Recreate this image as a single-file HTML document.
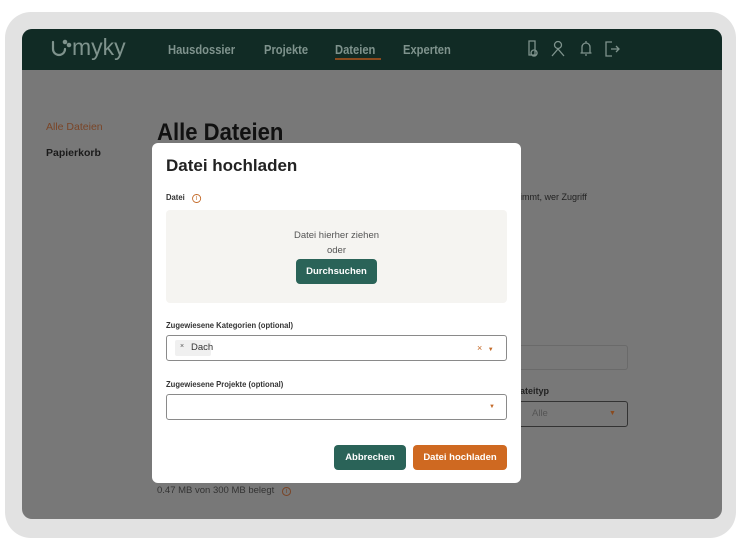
<!DOCTYPE html>
<html><head><meta charset="utf-8"><style>
*{margin:0;padding:0;box-sizing:border-box}
body{width:738px;height:554px;background:#fff;font-family:"Liberation Sans",sans-serif;position:relative;overflow:hidden}
.frame{position:absolute;left:5px;top:12px;width:731px;height:526px;background:#e2e2e2;border-radius:26px}
.screen{position:absolute;left:22px;top:29px;width:700px;height:490px;background:#787878;border-radius:10px;overflow:hidden}
.nav{position:absolute;left:0;top:0;width:700px;height:41px;background:#112b25}
.a{position:absolute;white-space:nowrap}
.navt{color:#7f938d;font-size:13px;font-weight:bold;top:13px;transform:scaleX(0.86);transform-origin:left}
.modal{position:absolute;left:152px;top:143px;width:369px;height:340px;background:#fff;border-radius:6px}
.lbl{font-size:8.5px;color:#333;font-weight:bold;transform:scaleX(0.9);transform-origin:left}
.box{position:absolute;left:14px;width:341px;height:26px;border:1px solid #8a8a8a;border-radius:3px;background:#fff}
.btn{position:absolute;height:25px;border-radius:4px;color:#fff;font-size:9.5px;font-weight:bold;text-align:center;line-height:25px}
</style></head><body>
<div class="frame"></div>
<div class="screen">
 <div class="nav">
  <svg style="position:absolute;left:28px;top:9px" width="22" height="22" fill="none" stroke="#7f938d" stroke-width="2.2" stroke-linecap="round">
   <path d="M3 4v7a6 6 0 0 0 12 0"/><circle cx="15" cy="4" r="1.2" fill="#7f938d"/><circle cx="19" cy="7" r="1.2" fill="#7f938d"/>
  </svg>
  <div class="a" style="left:50px;top:5px;color:#7f938d;font-size:23px">myky</div>
  <div class="a navt" style="left:146px">Hausdossier</div>
  <div class="a navt" style="left:242px">Projekte</div>
  <div class="a navt" style="left:313px">Dateien</div>
  <div style="position:absolute;left:313px;top:29px;width:46px;height:2px;background:#8a4a1e"></div>
  <div class="a navt" style="left:381px">Experten</div>
  <svg style="position:absolute;left:505px;top:10px" width="110" height="20" fill="none" stroke="#7f938d" stroke-width="1.3">
   <path d="M2 2h6v14H2z M7 11a3 3 0 1 0 .1 0"/>
   <circle cx="31" cy="6" r="3.5"/><path d="M25 17l6-7 6 7"/>
   <path d="M55 14V8a4 4 0 0 1 8 0v6h1.5H53.5M58 16h2M59 2v2"/>
   <path d="M85 3h-6v14h6M84 10h8M89 7l3 3-3 3"/>
  </svg>
 </div>
 <div class="a" style="left:24px;top:92px;font-size:10.5px;color:#7a4527">Alle Dateien</div>
 <div class="a" style="left:24px;top:118px;font-size:10.5px;color:#1a1a1a;font-weight:bold">Papierkorb</div>
 <div class="a" style="left:135px;top:90px;font-size:24px;font-weight:bold;color:#111;transform:scaleX(0.92);transform-origin:left">Alle Dateien</div>
 <div class="a" style="left:498px;top:163px;font-size:9px;color:#222">immt, wer Zugriff</div>
 <div style="position:absolute;left:495px;top:316px;width:111px;height:25px;border:1px solid #6a6a6a;border-radius:3px"></div>
 <div class="a" style="left:498px;top:357px;font-size:9px;color:#222;font-weight:bold">ateityp</div>
 <div style="position:absolute;left:495px;top:372px;width:111px;height:26px;border:1px solid #333;border-radius:3px"></div>
 <div class="a" style="left:510px;top:379px;font-size:9.5px;color:#555">Alle</div>
 <div class="a" style="left:587px;top:381px;font-size:7px;color:#8a4a1e">▼</div>
 <div class="a" style="left:135px;top:456px;font-size:9.5px;color:#333">0.47 MB von 300 MB belegt <span style="color:#7a4527;border:1px solid #7a4527;border-radius:50%;font-size:7px;padding:0 3px;margin-left:5px">i</span></div>
</div>
<div class="modal">
 <div class="a" style="left:14px;top:13px;font-size:17px;font-weight:bold;color:#222">Datei hochladen</div>
 <div class="a lbl" style="left:14px;top:49px">Datei <span style="color:#c46b2a;border:1px solid #c46b2a;border-radius:50%;font-size:7px;padding:0 3px;margin-left:6px;font-weight:normal">i</span></div>
 <div style="position:absolute;left:14px;top:67px;width:341px;height:93px;background:#f5f4f1;border-radius:4px"></div>
 <div class="a" style="left:0;width:369px;text-align:center;top:87px;font-size:9.5px;color:#555">Datei hierher ziehen</div>
 <div class="a" style="left:0;width:369px;text-align:center;top:102px;font-size:9.5px;color:#555">oder</div>
 <div class="btn" style="left:144px;top:116px;width:81px;background:#2a6358">Durchsuchen</div>
 <div class="a lbl" style="left:14px;top:177px">Zugewiesene Kategorien (optional)</div>
 <div class="box" style="top:192px"></div>
 <div style="position:absolute;left:23px;top:197px;width:36px;height:16px;background:#f0f0f0;border-radius:2px"></div>
 <div class="a" style="left:28px;top:200px;font-size:7px;color:#555">×</div>
 <div class="a" style="left:39px;top:199px;font-size:9.5px;color:#333">Dach</div>
 <div class="a" style="left:325px;top:200px;font-size:9px;color:#c46b2a">× <span style="font-size:6px;margin-left:3px">▼</span></div>
 <div class="a lbl" style="left:14px;top:236px">Zugewiesene Projekte (optional)</div>
 <div class="box" style="top:251px"></div>
 <div class="a" style="left:337px;top:261px;font-size:6px;color:#c46b2a">▼</div>
 <div class="btn" style="left:182px;top:302px;width:72px;background:#2a6358">Abbrechen</div>
 <div class="btn" style="left:261px;top:302px;width:94px;background:#cf6921">Datei hochladen</div>
</div>
</body></html>
